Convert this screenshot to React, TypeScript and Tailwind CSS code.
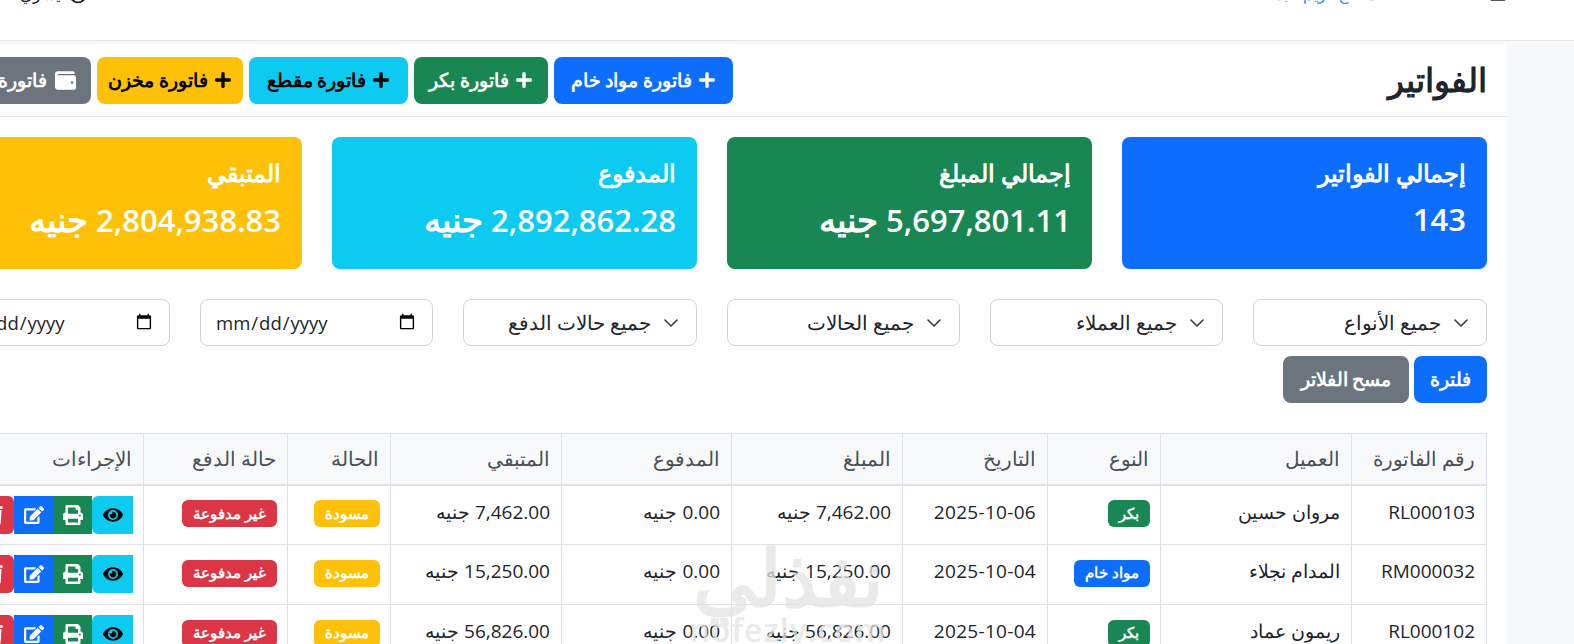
import { FaEdit, FaEye, FaPlus, FaPrint, FaTrash, FaWallet } from "react-icons/fa";
import { UserCircle, Menu } from "lucide-react";

const stats = [
  { title: "إجمالي الفواتير", value: "143", unit: "", cls: "bg-[#0d6efd]" },
  { title: "إجمالي المبلغ", value: "5,697,801.11", unit: "جنيه", cls: "bg-[#198754]" },
  { title: "المدفوع", value: "2,892,862.28", unit: "جنيه", cls: "bg-[#0dcaf0]" },
  { title: "المتبقي", value: "2,804,938.83", unit: "جنيه", cls: "bg-[#ffc107]" },
];

const actions = [
  { label: "فاتورة مواد خام", cls: "w-[179px] bg-[#0d6efd] text-white" },
  { label: "فاتورة بكر", cls: "w-[134px] bg-[#198754] text-white" },
  { label: "فاتورة مقطع", cls: "w-[159px] bg-[#0dcaf0] text-black" },
  { label: "فاتورة مخزن", cls: "w-[146px] bg-[#ffc107] text-black" },
];

const columns = [
  { label: "رقم الفاتورة", cls: "w-[135px]" },
  { label: "العميل", cls: "w-[191px]" },
  { label: "النوع", cls: "w-[113px]" },
  { label: "التاريخ", cls: "w-[145px]" },
  { label: "المبلغ", cls: "w-[171px]" },
  { label: "المدفوع", cls: "w-[170px]" },
  { label: "المتبقي", cls: "w-[171px]" },
  { label: "الحالة", cls: "w-[103px]" },
  { label: "حالة الدفع", cls: "w-[144px]" },
  { label: "الإجراءات", cls: "w-[207px]" },
];

const rows = [
  { no: "RL000103", client: "مروان حسين", type: "بكر", raw: false, date: "2025-10-06", amount: "7,462.00 جنيه", rest: "7,462.00 جنيه" },
  { no: "RM000032", client: "المدام نجلاء", type: "مواد خام", raw: true, date: "2025-10-04", amount: "15,250.00 جنيه", rest: "15,250.00 جنيه" },
  { no: "RL000102", client: "ريمون عماد", type: "بكر", raw: false, date: "2025-10-04", amount: "56,826.00 جنيه", rest: "56,826.00 جنيه" },
];

const cellCls = "border border-[#dee2e6] px-[11px] pt-[12px] align-top";

const Badge = ({ label, cls }: { label: string; cls: string }) => (
  <span className={`-mr-px inline-flex h-[27px] items-center rounded-md px-[11px] text-[14.5px] font-semibold leading-none text-white ${cls}`}>
    {label}
  </span>
);

const FilterSelect = ({ label, cls }: { label: string; cls: string }) => (
  <div className={`flex h-[47px] shrink-0 items-center gap-[12px] rounded-lg border border-[#ced4da] bg-white pr-[17px] text-[20px] text-[#212529] ${cls}`}>
    <svg viewBox="0 0 16 16" className="h-4 w-4 shrink-0" fill="none" stroke="#343a40" strokeWidth="1.6" strokeLinecap="round" strokeLinejoin="round">
      <path d="m2 5 6 6 6-6" />
    </svg>
    <span>{label}</span>
  </div>
);

const DateInput = () => (
  <input
    type="date"
    dir="ltr"
    className="h-[47px] w-[233px] shrink-0 rounded-lg border border-[#ced4da] bg-white px-[14px] text-[18.5px] text-[#212529]"
  />
);

export default function App() {
  return (
    <div dir="rtl" className="relative h-[644px] w-[1574px] overflow-hidden bg-[#f6f8fa] font-['Open_Sans','Noto_Sans',sans-serif] text-[#212529]">
      <nav className="h-[41px] overflow-hidden border-b border-[#e5e7eb] bg-white">
        <div className="-mt-[18px] flex items-center justify-between pl-[20px] pr-[66px]">
          <div className="flex items-center gap-[112px]">
            <Menu className="h-5 w-5 text-[#212529]" />
            <span className="text-[16px] text-[#3498db]">مصنع كريم عبد الله</span>
          </div>
          <div className="flex items-center gap-2 text-[16px]">
            <UserCircle className="h-5 w-5" />
            <span>يسري</span>
          </div>
        </div>
      </nav>

      <main className="flex pr-[67px] pt-[3px]">
        <section className="w-[1590px] shrink-0 bg-white">
          <header className="flex h-[73px] items-center justify-between border-b border-[#e5e7eb] px-5">
            <h1 className="text-[33px] font-semibold">الفواتير</h1>
            <div className="flex gap-[6px]">
              {actions.map((a) => (
                <button key={a.label} className={`flex h-[47px] items-center justify-center gap-[6px] rounded-lg text-[19px] font-semibold ${a.cls}`}>
                  <FaPlus className="h-[18px] w-[18px]" />
                  {a.label}
                </button>
              ))}
              <button className="flex h-[47px] w-[154px] items-center gap-2 whitespace-nowrap rounded-lg bg-[#6c757d] pr-[15px] text-[19px] font-semibold text-white">
                <FaWallet className="h-[21px] w-[21px] shrink-0" />
                فاتورة مصروفات
              </button>
            </div>
          </header>

          <div className="px-5 pt-5">
            <div className="flex gap-[30px]">
              {stats.map((s) => (
                <div key={s.title} className={`h-[132px] w-[365px] shrink-0 rounded-lg px-[21px] pt-[19px] text-white ${s.cls}`}>
                  <div className="text-[24px] font-semibold leading-[34px]">{s.title}</div>
                  <div className="mt-[6px] flex items-baseline gap-[8px] text-[31px] font-semibold leading-[46px]">
                    <span>{s.value}</span>
                    {s.unit && <span className="text-[34px]">{s.unit}</span>}
                  </div>
                </div>
              ))}
            </div>

            <div className="mt-[30px] flex gap-[30px]">
              <FilterSelect label="جميع الأنواع" cls="w-[234px]" />
              <FilterSelect label="جميع العملاء" cls="w-[233px]" />
              <FilterSelect label="جميع الحالات" cls="w-[233px]" />
              <FilterSelect label="جميع حالات الدفع" cls="w-[234px]" />
              <DateInput />
              <DateInput />
            </div>

            <div className="mt-[10px] flex gap-[5px]">
              <button className="h-[47px] w-[73px] rounded-lg bg-[#0d6efd] text-[19px] font-semibold text-white">فلترة</button>
              <button className="h-[47px] w-[126px] rounded-lg bg-[#6c757d] text-[19px] font-semibold text-white">مسح الفلاتر</button>
            </div>

            <table className="mt-[30px] w-[1550px] table-fixed border-collapse text-[19px]">
              <thead>
                <tr className="h-[51px] bg-[#f8f9fa] text-[#495057]">
                  {columns.map((c) => (
                    <th key={c.label} className={`border border-b-2 border-[#dee2e6] px-[11px] text-right text-[20px] font-medium ${c.cls}`}>
                      {c.label}
                    </th>
                  ))}
                </tr>
              </thead>
              <tbody>
                {rows.map((r) => (
                  <tr key={r.no} className="h-[60px]">
                    <td className={cellCls}>{r.no}</td>
                    <td className={cellCls}>{r.client}</td>
                    <td className={cellCls}>
                      <Badge label={r.type} cls={r.raw ? "bg-[#0d6efd]" : "bg-[#198754]"} />
                    </td>
                    <td className={`${cellCls} tracking-[0.3px]`}>{r.date}</td>
                    <td className={cellCls}>{r.amount}</td>
                    <td className={cellCls}>0.00 جنيه</td>
                    <td className={cellCls}>{r.rest}</td>
                    <td className={cellCls}>
                      <Badge label="مسودة" cls="bg-[#ffc107]" />
                    </td>
                    <td className={cellCls}>
                      <Badge label="غير مدفوعة" cls="bg-[#dc3545]" />
                    </td>
                    <td className="border border-[#dee2e6] pr-[10px] pt-[10px] align-top">
                      <div className="flex text-[18px]">
                        <button className="flex h-[38px] w-[41px] items-center justify-center rounded-l-md bg-[#0dcaf0] text-black"><FaEye className="h-5 w-5" /></button>
                        <button className="flex h-[38px] w-[38px] items-center justify-center bg-[#198754] text-white"><FaPrint className="h-5 w-5" /></button>
                        <button className="flex h-[38px] w-[40px] items-center justify-center bg-[#0d6efd] text-white"><FaEdit className="h-5 w-5" /></button>
                        <button className="flex h-[38px] w-[40px] items-center justify-center rounded-r-md bg-[#dc3545] text-white"><FaTrash className="h-5 w-5" /></button>
                      </div>
                    </td>
                  </tr>
                ))}
              </tbody>
            </table>
          </div>
        </section>
      </main>

      {/* site watermark */}
      <div className="pointer-events-none absolute left-[683px] top-[538px] w-[210px] text-center text-[#e4e4e4] opacity-75">
        <div className="text-[78px] font-extrabold leading-[76px]">نفذلي</div>
        <div dir="ltr" className="text-[32px] font-semibold leading-[32px] tracking-[1px]">nofezly.com</div>
      </div>
    </div>
  );
}
